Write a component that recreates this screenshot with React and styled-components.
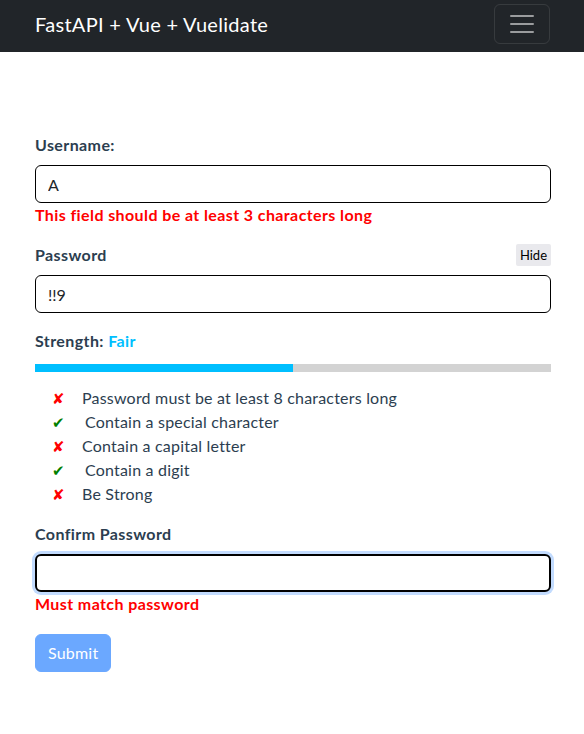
import React, { useState } from "react";
import styled, { createGlobalStyle } from "styled-components";

const GlobalStyle = createGlobalStyle`
  * { box-sizing: border-box; }
  body {
    margin: 0;
    font-family: "Lato", "Noto Sans", sans-serif;
    background: #fff;
    color: #2c3e50;
  }
`;

const Navbar = styled.nav`
  height: 52px;
  background: #212529;
  display: flex;
  align-items: center;
  justify-content: space-between;
  padding: 0 34px 0 35px;
`;

const Brand = styled.a`
  color: #fff;
  font-size: 20px;
  letter-spacing: 0.3px;
  text-decoration: none;
  margin-top: -4px;
`;

const Toggler = styled.button`
  width: 56px;
  height: 40px;
  margin-top: -4px;
  border: 1px solid rgba(255, 255, 255, 0.1);
  border-radius: 6px;
  background: transparent;
  display: flex;
  align-items: center;
  justify-content: center;
`;

const Container = styled.main`
  padding: 81px 33px 40px 35px;
`;

const Form = styled.form`
  display: flex;
  flex-direction: column;
`;

const Group = styled.div`
  margin-bottom: ${(p) => p.$mb ?? 20}px;
`;

const LabelRow = styled.div`
  display: flex;
  justify-content: space-between;
  align-items: flex-end;
  margin-bottom: 8px;
`;

const Label = styled.label`
  font-weight: 700;
  font-size: 16px;
  letter-spacing: 0.4px;
  line-height: 24px;
  color: #2c3e50;
`;

const Input = styled.input`
  display: block;
  width: 100%;
  height: 38px;
  padding: 6px 12px;
  font-family: inherit;
  font-size: 16px;
  color: #212529;
  border: ${(p) => (p.$focus ? "2px solid #000" : "1px solid #000")};
  border-radius: 6px;
  box-shadow: ${(p) => (p.$focus ? "0 0 0 3px #c2dbfe" : "none")};
  outline: none;
  background: #fff;
`;

const Error = styled.div`
  color: #ff0000;
  font-weight: 700;
  font-size: 16px;
  letter-spacing: 0.4px;
  line-height: 22px;
  margin-top: 1px;
`;

const HideButton = styled.button`
  font-family: "Lato", sans-serif;
  font-size: 13px;
  padding: 2px 4px;
  border: none;
  border-radius: 2px;
  background: #e9e9ed;
  color: #000;
  height: 22px;
  margin-bottom: 1px;
`;

const Strength = styled.div`
  font-weight: 700;
  font-size: 16px;
  letter-spacing: 0.4px;
  line-height: 24px;
  margin-bottom: 11px;
  span {
    color: #00bfff;
  }
`;

const Bar = styled.div`
  height: 8px;
  background: #d3d3d3;
  margin-bottom: 14px;
`;

const Fill = styled.div`
  height: 100%;
  background: #00bfff;
`;

const Rules = styled.ul`
  list-style: none;
  margin: 0 0 16px;
  padding: 0 0 0 17px;
`;

const Rule = styled.li`
  display: flex;
  align-items: center;
  font-size: 16px;
  letter-spacing: 0.2px;
  line-height: 24px;
  color: #2c3e50;
`;

const Mark = styled.span`
  width: ${(p) => (p.$ok ? 33 : 30)}px;
  color: ${(p) => (p.$ok ? "#008000" : "#ff0000")};
  font-size: 15px;
`;

const Submit = styled.button`
  align-self: flex-start;
  margin-top: 19px;
  padding: 6px 12px;
  font-family: inherit;
  font-size: 16px;
  letter-spacing: 0.2px;
  line-height: 24px;
  color: #fff;
  background: #6ba8ff;
  border: 1px solid #6ba8ff;
  border-radius: 6px;
`;

const rules = [
  { ok: false, text: "Password must be at least 8 characters long" },
  { ok: true, text: "Contain a special character" },
  { ok: false, text: "Contain a capital letter" },
  { ok: true, text: "Contain a digit" },
  { ok: false, text: "Be Strong" },
];

const App = () => {
  const [username, setUsername] = useState("A");
  const [password, setPassword] = useState("!!9");
  const [confirm, setConfirm] = useState("");

  return (
    <>
      <GlobalStyle />
      <Navbar>
        <Brand href="#">FastAPI + Vue + Vuelidate</Brand>
        <Toggler type="button" aria-label="Toggle navigation">
          <svg width="30" height="30" viewBox="0 0 30 30">
            <path
              stroke="rgba(255,255,255,0.55)"
              strokeLinecap="round"
              strokeWidth="2"
              d="M4 7h22M4 15h22M4 23h22"
            />
          </svg>
        </Toggler>
      </Navbar>

      <Container>
        <Form onSubmit={(e) => e.preventDefault()}>
          <Group $mb={17}>
            <LabelRow>
              <Label htmlFor="username">Username:</Label>
            </LabelRow>
            <Input
              id="username"
              value={username}
              onChange={(e) => setUsername(e.target.value)}
            />
            <Error>This field should be at least 3 characters long</Error>
          </Group>

          <Group $mb={16}>
            <LabelRow>
              <Label htmlFor="password">Password</Label>
              <HideButton type="button">Hide</HideButton>
            </LabelRow>
            <Input
              id="password"
              value={password}
              onChange={(e) => setPassword(e.target.value)}
            />
          </Group>

          <Strength>
            Strength: <span>Fair</span>
          </Strength>
          <Bar>
            <Fill style={{ width: "50%" }} />
          </Bar>

          <Rules>
            {rules.map((r) => (
              <Rule key={r.text}>
                <Mark $ok={r.ok}>{r.ok ? "✔" : "✘"}</Mark>
                {r.text}
              </Rule>
            ))}
          </Rules>

          <Group $mb={0}>
            <LabelRow>
              <Label htmlFor="confirm">Confirm Password</Label>
            </LabelRow>
            <Input
              id="confirm"
              $focus
              autoFocus
              value={confirm}
              onChange={(e) => setConfirm(e.target.value)}
            />
            <Error>Must match password</Error>
          </Group>

          <Submit type="submit" disabled>
            Submit
          </Submit>
        </Form>
      </Container>
    </>
  );
};

export default App;
